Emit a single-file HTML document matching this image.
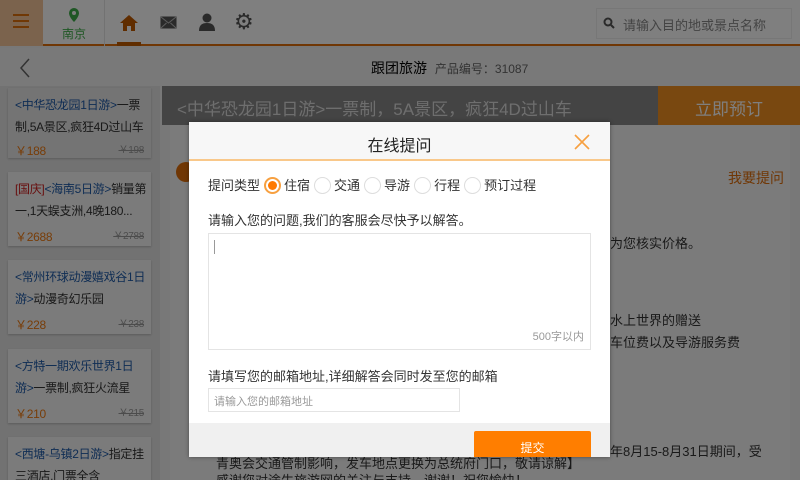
<!DOCTYPE html>
<html style="width:800px;height:480px;overflow:hidden"><head><meta charset="utf-8"><style>
*{margin:0;padding:0;box-sizing:border-box}
body{width:800px;height:480px;overflow:hidden;position:relative;background:#f0f0f0;font-family:"Liberation Sans","Noto Sans CJK SC",sans-serif;font-size:13px;color:#333}
.abs{position:absolute}
.hdr{left:0;top:0;width:800px;height:46px;background:#fff;border-bottom:2px solid #e06e0a}
.card{left:8px;width:143px;background:#f7f7f7;box-shadow:0 1px 2px rgba(0,0,0,.2);padding:6px 7px;font-size:12px;line-height:22px;color:#333;white-space:nowrap;overflow:hidden}
.card .b{color:#1e5aa8}
.card .p{color:#f07a10;font-size:12px;margin-top:4px;display:flex;justify-content:space-between}
.card .p s{color:#999;font-size:10px}
.ov{left:0;top:0;width:800px;height:480px;background:rgba(0,0,0,.5)}
.dlg{left:189px;top:122px;width:421px;height:335px;background:#fff;box-shadow:0 0 4px rgba(0,0,0,.4);overflow:hidden}
.rad{display:inline-block;width:17px;height:17px;border-radius:50%;border:1px solid #ddd;vertical-align:-4px;margin:0 3px 0 4px;background:#fff}
.rad.on{border:2px solid #f7a040;position:relative}
.rad.on:after{content:"";position:absolute;left:2px;top:2px;width:9px;height:9px;border-radius:50%;background:#ff7a00}
</style></head><body>
<div class="abs hdr"></div>
<div class="abs" style="left:0;top:0;width:43px;height:46px;background:#f6c79a"></div>
<div class="abs" style="left:13px;top:14px;width:16px;height:2px;background:#e0700a;box-shadow:0 6px 0 #e0700a,0 12px 0 #e0700a"></div>
<div class="abs" style="left:43px;top:0;width:62px;height:46px;border-right:1px solid #e4e4e4"></div>
<svg class="abs" style="left:67px;top:7px" width="14" height="16" viewBox="0 0 14 16"><path d="M7 1a5 5 0 0 0-5 5c0 4 5 9 5 9s5-5 5-9a5 5 0 0 0-5-5z" fill="#3fae4a"/><circle cx="7" cy="6" r="2" fill="#fff"/></svg>
<div class="abs" style="left:62px;top:25px;font-size:12px;color:#3fae4a">南京</div>
<svg class="abs" style="left:119px;top:14px" width="20" height="18" viewBox="0 0 20 18"><path d="M10 1L1 9h3v8h4v-5h4v5h4V9h3z" fill="#c05a00"/></svg>
<div class="abs" style="left:117px;top:42px;width:24px;height:4px;background:#c05a00"></div>
<svg class="abs" style="left:160px;top:16px" width="17" height="13" viewBox="0 0 17 13"><rect x="0.5" y="0.5" width="16" height="12" fill="#555"/><path d="M1 1l7.5 6L16 1M1 12l5.5-5M16 12l-5.5-5" stroke="#bbb" fill="none"/></svg>
<svg class="abs" style="left:199px;top:13px" width="16" height="18" viewBox="0 0 16 18"><circle cx="8" cy="5" r="4.5" fill="#555"/><path d="M0 18c0-6 3-8 8-8s8 2 8 8z" fill="#555"/></svg>
<div class="abs" style="left:234px;top:9px;font-size:22px;color:#555;line-height:26px">⚙</div>
<div class="abs" style="left:596px;top:8px;width:196px;height:31px;border:1px solid #eee;background:#fff;font-size:13px;color:#888;padding:6px 0 0 26px">请输入目的地或景点名称</div>
<svg class="abs" style="left:603px;top:17px" width="12" height="12" viewBox="0 0 12 12"><circle cx="5" cy="5" r="3.5" stroke="#555" stroke-width="2" fill="none"/><path d="M8 8l3 3" stroke="#555" stroke-width="2"/></svg>
<div class="abs" style="left:0;top:48px;width:800px;height:38px;background:#f3f3f3"></div>
<svg class="abs" style="left:19px;top:58px" width="12" height="20" viewBox="0 0 12 20"><path d="M10 1L2 10l8 9" stroke="#666" stroke-width="1.5" fill="none"/></svg>
<div class="abs" style="left:371px;top:58px;font-size:14px;color:#000">跟团旅游 <span style="font-size:12px;color:#666;margin-left:4px">产品编号：31087</span></div>
<div class="abs" style="left:0;top:86px;width:160px;height:394px;background:#e4e4e4"></div>
<div class="abs card" style="top:88px;height:70px;background:#e8e8e8;letter-spacing:-0.3px"><span class="b">&lt;中华恐龙园1日游&gt;</span>一票<br>制,5A景区,疯狂4D过山车<div class="p" style="margin-top:2px"><span>￥188</span><s>￥198</s></div></div>
<div class="abs card" style="top:172px;height:74px;letter-spacing:-0.3px"><span style="color:#d02020">[国庆]</span><span class="b">&lt;海南5日游&gt;</span>销量第<br>一,1天蜈支洲,4晚180...<div class="p"><span>￥2688</span><s>￥2788</s></div></div>
<div class="abs card" style="top:260px;height:74px;letter-spacing:-0.3px"><span class="b">&lt;常州环球动漫嬉戏谷1日<br>游&gt;</span>动漫奇幻乐园<div class="p"><span>￥228</span><s>￥238</s></div></div>
<div class="abs card" style="top:349px;height:74px;letter-spacing:-0.3px"><span class="b">&lt;方特一期欢乐世界1日<br>游&gt;</span>一票制,疯狂火流星<div class="p"><span>￥210</span><s>￥215</s></div></div>
<div class="abs card" style="top:437px;height:60px;letter-spacing:-0.3px"><span class="b">&lt;西塘-乌镇2日游&gt;</span>指定挂<br>三酒店,门票全含</div>
<div class="abs" style="left:162px;top:86px;width:496px;height:39px;background:#888;color:#ddd;font-size:17px;padding:9px 0 0 15px">&lt;中华恐龙园1日游&gt;一票制，5A景区，疯狂4D过山车</div>
<div class="abs" style="left:658px;top:86px;width:142px;height:39px;background:#f39020;color:#fff;font-size:17px;text-align:center;padding-top:9px">立即预订</div>
<div class="abs" style="left:170px;top:125px;width:620px;height:355px;background:#f7f7f7"></div>
<div class="abs" style="left:176px;top:162px;width:20px;height:20px;border-radius:50%;background:#e06e0a"></div>
<div class="abs" style="left:728px;top:168px;font-size:14px;color:#e06e0a">我要提问</div>
<div class="abs" style="left:610px;top:233px;font-size:13px">为您核实价格。</div>
<div class="abs" style="left:610px;top:310px;font-size:13px;line-height:22px">水上世界的赠送<br>车位费以及导游服务费</div>
<div class="abs" style="left:610px;top:441px;font-size:13px;white-space:nowrap">年8月15-8月31日期间，受</div>
<div class="abs" style="left:216px;top:455px;font-size:13px;line-height:17px;white-space:nowrap">青奥会交通管制影响，发车地点更换为总统府门口，敬请谅解】<br>感谢您对途牛旅游网的关注与支持，谢谢！祝您愉快！</div>
<div class="abs ov"></div>
<div class="abs dlg">
 <div style="height:39px;background:#f7f7f7;border-bottom:2px solid #f9c88a;text-align:center;font-size:16px;color:#222;padding-top:10px">在线提问</div>
 <svg style="position:absolute;left:385px;top:12px" width="16" height="16" viewBox="0 0 16 16"><path d="M1 1l14 14M15 1L1 15" stroke="#f7a040" stroke-width="1.6"/></svg>
 <div style="position:absolute;left:19px;top:53px;font-size:13px;color:#333;white-space:nowrap">提问类型<span class="rad on"></span>住宿<span class="rad"></span>交通<span class="rad"></span>导游<span class="rad"></span>行程<span class="rad"></span>预订过程</div>
 <div style="position:absolute;left:19px;top:88px;font-size:13px;color:#333">请输入您的问题,我们的客服会尽快予以解答。</div>
 <div style="position:absolute;left:19px;top:111px;width:383px;height:117px;border:1px solid #e4e4e4"><div style="position:absolute;left:5px;top:6px;width:1px;height:14px;background:#999"></div><div style="position:absolute;right:6px;bottom:5px;font-size:11px;color:#999">500字以内</div></div>
 <div style="position:absolute;left:19px;top:244px;font-size:13px;color:#333">请填写您的邮箱地址,详细解答会同时发至您的邮箱</div>
 <div style="position:absolute;left:19px;top:266px;width:252px;height:24px;border:1px solid #e4e4e4;font-size:11px;color:#999;padding:4px 0 0 5px">请输入您的邮箱地址</div>
 <div style="position:absolute;left:0;top:301px;width:421px;height:34px;background:#f0f0f0"></div>
 <div style="position:absolute;left:285px;top:309px;width:117px;height:30px;background:#ff7e00;border-radius:2px;color:#fff;font-size:12px;text-align:center;padding-top:8px">提交</div>
</div>
</body></html>
